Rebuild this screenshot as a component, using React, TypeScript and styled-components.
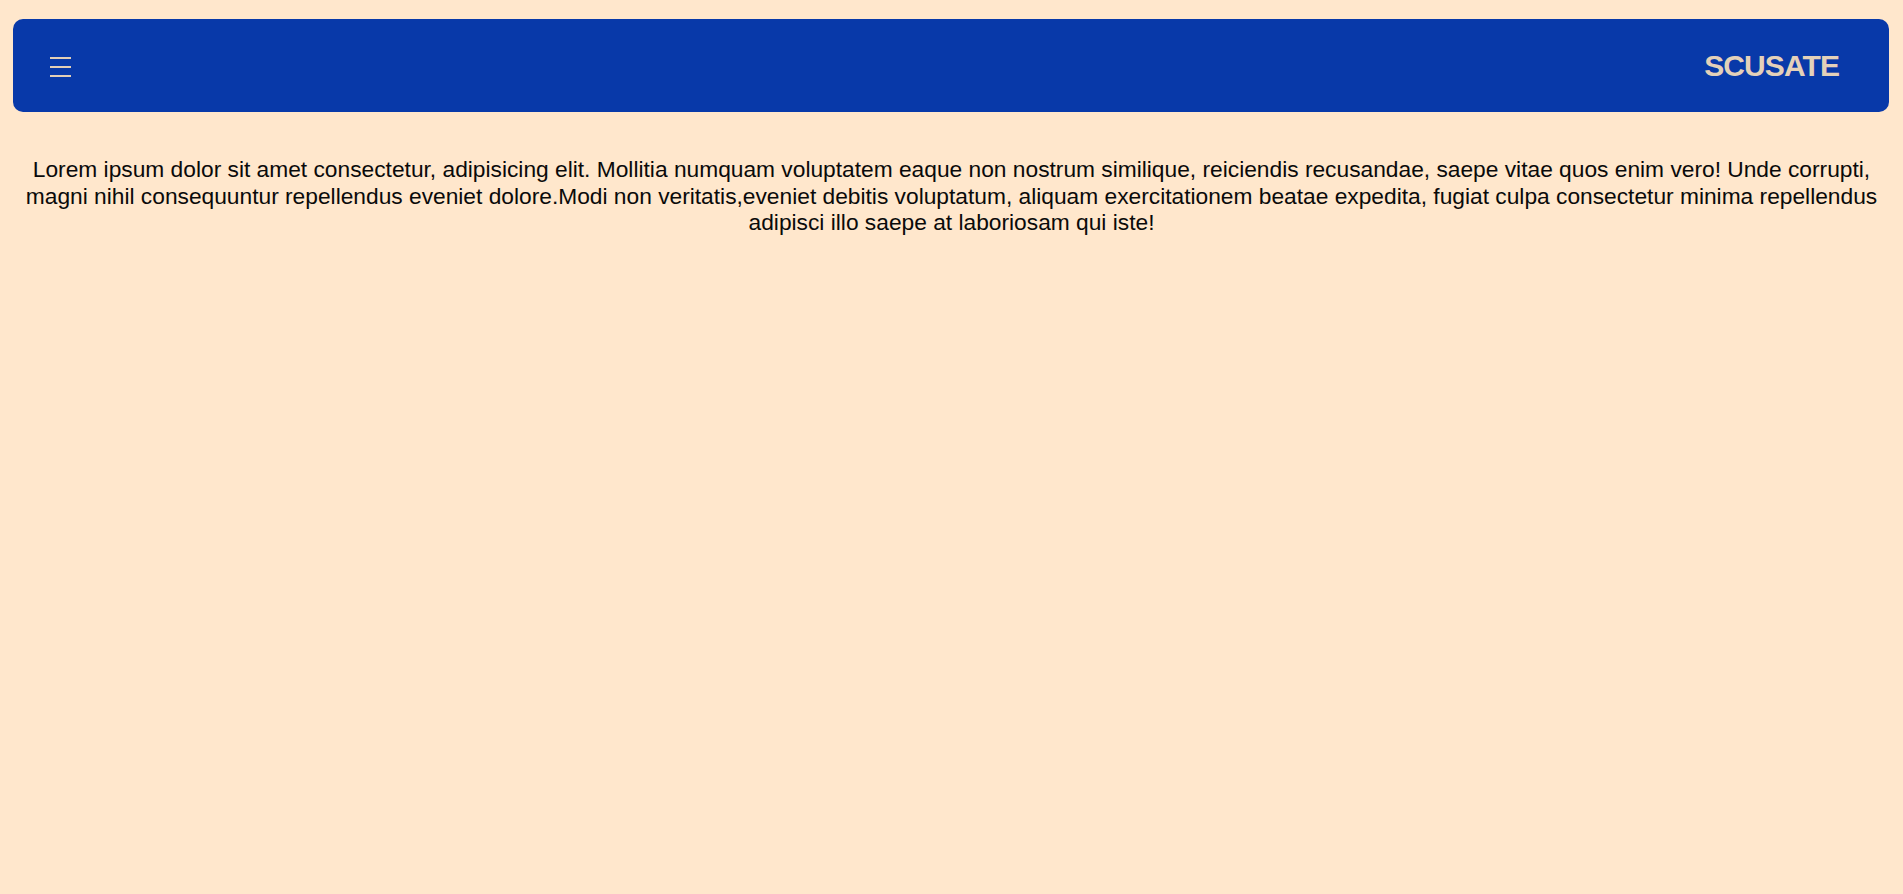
import React from "react";
import styled, { createGlobalStyle } from "styled-components";

const GlobalStyle = createGlobalStyle`
  html, body {
    margin: 0;
    padding: 0;
    background: #ffe7cc;
  }
  body {
    font-family: "Liberation Sans", Arial, sans-serif;
  }
  #root {
    min-height: 100vh;
  }
`;

const Page = styled.div`
  display: flex;
  flex-direction: column;
  min-height: 100vh;
  background: #ffe7cc;
`;

const NavBar = styled.header`
  display: flex;
  align-items: center;
  justify-content: space-between;
  height: 93px;
  margin: 19px 14px 0 13px;
  padding: 0 50px 0 37px;
  background: #0839a9;
  border-radius: 10px;
  box-sizing: border-box;
`;

const MenuButton = styled.button`
  display: flex;
  flex-direction: column;
  justify-content: space-between;
  width: 21px;
  height: 20px;
  padding: 0;
  margin-top: 3px;
  border: none;
  background: transparent;
  cursor: pointer;
`;

const MenuBar = styled.span`
  display: block;
  height: 2px;
  width: 100%;
  background: #e2cfb7;
`;

const Brand = styled.h1`
  margin: 0;
  font-family: "Liberation Sans", Arial, sans-serif;
  font-weight: 700;
  font-size: 30px;
  letter-spacing: -0.9px;
  color: #e4d1b9;
`;

const Intro = styled.p`
  margin: 44px 16px 0;
  text-align: center;
  font-size: 22.75px;
  line-height: 26.5px;
  color: #0a0a0a;
`;

export default function App() {
  return (
    <>
      <GlobalStyle />
      <Page>
        <NavBar>
          <MenuButton aria-label="menu">
            <MenuBar />
            <MenuBar />
            <MenuBar />
          </MenuButton>
          <Brand>SCUSATE</Brand>
        </NavBar>
        <Intro>
          Lorem ipsum dolor sit amet consectetur, adipisicing elit. Mollitia
          numquam voluptatem eaque non nostrum similique, reiciendis
          recusandae, saepe vitae quos enim vero! Unde corrupti, magni nihil
          consequuntur repellendus eveniet dolore.Modi non veritatis,eveniet
          debitis voluptatum, aliquam exercitationem beatae expedita, fugiat
          culpa consectetur minima repellendus adipisci illo saepe at
          laboriosam qui iste!
        </Intro>
      </Page>
    </>
  );
}
